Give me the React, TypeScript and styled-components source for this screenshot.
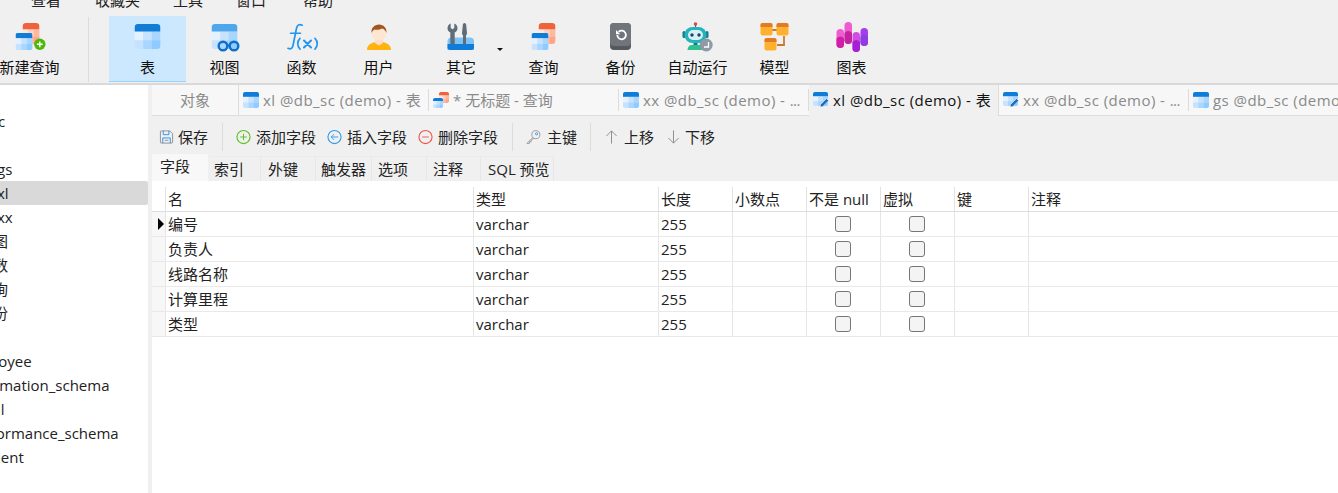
import React from "react";
import styled, { createGlobalStyle } from "styled-components";

const FONT = `"Open Sans", "Noto Sans CJK SC", sans-serif`;

const Global = createGlobalStyle`
  html, body { margin: 0; padding: 0; background: #fff; }
  body { font-family: ${FONT}; font-size: 15px; color: #111; }
`;

const Page = styled.div`
  width: 1338px; height: 493px; overflow: hidden; display: flex; flex-direction: column; background: #fff;
`;
const Top = styled.header`
  height: 83px; flex: none; background: #f0f0f0; border-bottom: 2px solid #d9d9d9; overflow: hidden;
`;
const MenuBar = styled.nav`
  height: 16px; overflow: hidden; position: relative;
`;
const MenuInner = styled.div`
  display: flex; margin-top: -10px; line-height: 20px; color: #222;
`;
const MenuItem = styled.span<{ $w: number }>`
  flex: none; width: ${(p) => p.$w}px;
`;
const Ribbon = styled.div`
  display: flex; height: 67px; margin-left: -9px;
`;
const RibbonDivider = styled.div`
  width: 1px; height: 65px; margin: 1px 20px 0 20px; background: #dcdcdc; flex: none;
`;
const RibbonBtn = styled.div<{ $active?: boolean; $w?: number }>`
  position: relative; flex: none; box-sizing: border-box; width: ${(p) => p.$w ?? 77}px; height: 66px;
  display: flex; flex-direction: column; align-items: center; padding-top: 6px;
  background: ${(p) => (p.$active ? "#cce8ff" : "transparent")};
  border-bottom: 1px solid ${(p) => (p.$active ? "#99d1ff" : "transparent")};
`;
const RibbonIcon = styled.svg`
  width: 40px; height: 32px; display: block; flex: none;
`;
const RibbonLabel = styled.span`
  line-height: 20px; margin-top: 3px; white-space: nowrap; color: #111;
`;
const Caret = styled.i`
  position: absolute; left: 80px; top: 32px; width: 0; height: 0;
  border-left: 3px solid transparent; border-right: 3px solid transparent; border-top: 3px solid #111;
`;
const Body = styled.div`
  flex: 1; display: flex; min-height: 0;
`;
const Sidebar = styled.aside`
  width: 148px; flex: none; background: #fff; overflow: hidden;
`;
const TreeRow = styled.div<{ $sel?: boolean; $x: number }>`
  height: 24px; line-height: 24px; white-space: nowrap; color: #222;
  text-indent: ${(p) => p.$x}px; border-radius: 0 2px 2px 0;
  background: ${(p) => (p.$sel ? "#d9d9d9" : "transparent")};
`;
const Gutter = styled.div`
  width: 4px; flex: none; background: #f0f0f0;
`;
const Main = styled.main`
  flex: 1; min-width: 0; display: flex; flex-direction: column; overflow: hidden;
`;
const TabBar = styled.div`
  height: 30px; flex: none; display: flex; background: #f7f7f7; border-bottom: 1px solid #dedede;
`;
const ObjTab = styled.div`
  width: 87px; flex: none; box-sizing: border-box; display: flex; align-items: center; justify-content: center;
  color: #8a8a8a; border-right: 1px solid #dcdcdc; height: 30px; padding-bottom: 1px;
`;
const Tab = styled.div<{ $active?: boolean }>`
  width: 190px; flex: none; box-sizing: border-box; height: ${(p) => (p.$active ? 31 : 30)}px; display: flex; align-items: center; gap: 4px;
  padding-left: 4px; padding-bottom: ${(p) => (p.$active ? 2 : 1)}px; white-space: nowrap; overflow: hidden; position: relative; z-index: ${(p) => (p.$active ? 1 : 0)};
  color: ${(p) => (p.$active ? "#111" : "#8a8a8a")};
  background: ${(p) => (p.$active ? "#f0f0f0" : "transparent")};
  ${(p) => (p.$active ? "border-right: 1px solid #dcdcdc;" : "")}
  &::after {
    content: ""; position: absolute; right: 0; top: 4px; bottom: 4px; width: 1px;
    background: ${(p) => (p.$active ? "transparent" : "#dcdcdc")};
  }
`;
const TabName = styled.span`
  letter-spacing: 0.45px;
`;
const TabMore = styled.span`
  letter-spacing: -0.6px;
`;
const TabIcon = styled.svg`
  width: 16px; height: 16px; flex: none; display: block;
`;
const ActionBar = styled.div`
  height: 38px; flex: none; box-sizing: border-box; background: #f0f0f0; display: flex; align-items: center; padding-left: 7px; padding-top: 3px;
`;
const ActionBtn = styled.div<{ $gap?: number; $after?: number }>`
  display: flex; align-items: center; gap: ${(p) => p.$gap ?? 5}px; margin-right: ${(p) => p.$after ?? 11}px; flex: none; white-space: nowrap; color: #222;
`;
const ActionIcon = styled.svg`
  width: 15px; height: 16px; flex: none; display: block;
`;
const ActionDivider = styled.div`
  width: 1px; height: 28px; background: #dcdcdc; flex: none; margin: 0 13px 0 3px;
`;
const SubTabs = styled.div`
  height: 27px; flex: none; display: flex; background: #f0f0f0; align-items: flex-end;
`;
const SubTab = styled.div<{ $active?: boolean; $w: number; $pad?: number }>`
  width: ${(p) => p.$w}px; flex: none; box-sizing: border-box; height: ${(p) => (p.$active ? 27 : 25)}px;
  padding-left: ${(p) => p.$pad ?? 5}px; line-height: ${(p) => (p.$active ? 25 : 24)}px; white-space: nowrap; color: #222;
  background: ${(p) => (p.$active ? "#f8f8f8" : "#f0f0f0")};
  border-right: 1px solid ${(p) => (p.$active ? "#f0f0f0" : "#e6e6e6")};
  border-top: ${(p) => (p.$active ? "none" : "1px solid #ececec")};
`;
const COLS = "13px 308px 185px 74px 74px 74px 74px 74px 1fr";
const HeadRow = styled.div`
  display: grid; grid-template-columns: ${COLS}; height: 31px; box-sizing: border-box; border-bottom: 1px solid #dedede; background: #fff;
`;
const HeadCell = styled.div<{ $blank?: boolean }>`
  margin-top: 6px; padding-left: ${(p) => (p.$blank ? 0 : 2)}px; box-sizing: border-box;
  line-height: 24px; white-space: nowrap; color: #222;
  border-left: ${(p) => (p.$blank ? "none" : "1px solid #e2e2e2")};
`;
const Row = styled.div`
  display: grid; grid-template-columns: ${COLS}; height: 25px; box-sizing: border-box; border-bottom: 1px solid #e9e9e9; background: #fff;
`;
const RowHead = styled.div<{ $current?: boolean }>`
  background: #f7f7f7; position: relative;
  ${(p) =>
    p.$current
      ? `&::after { content: ""; position: absolute; left: 6px; top: 6px; width: 0; height: 0;
         border-top: 6px solid transparent; border-bottom: 6px solid transparent; border-left: 6px solid #000; }`
      : ""}
`;
const Cell = styled.div`
  padding-left: 2px; border-left: 1px solid #e6e6e6; line-height: 24px; white-space: nowrap; color: #222; box-sizing: border-box;
`;
const CheckCell = styled(Cell)`
  display: flex; align-items: center; justify-content: center; padding-left: 0; padding-right: 1px;
`;
const Check = styled.span`
  width: 16px; height: 16px; box-sizing: border-box; border: 1px solid #767676; border-radius: 3px; background: #f4f4f4; display: block;
`;

const cells = [
  ["#e4f1ff", "#c6e2ff", "#a9d6ff"],
  ["#c6e2ff", "#a9d6ff", "#8fcbff"],
];

function TableGlyph({ x, y, w, h, band, palette = cells }: { x: number; y: number; w: number; h: number; band: string; palette?: string[][] }) {
  const bandH = h * 0.3;
  const cw = w / 3;
  const ch = (h - bandH) / 2;
  const id = `c${x}${y}${w}${band.slice(1)}`.replace(/\./g, "");
  return (
    <g>
      <clipPath id={id}>
        <rect x={x} y={y} width={w} height={h} rx={h > 20 ? 3.5 : 2} />
      </clipPath>
      <g clipPath={`url(#${id})`}>
        {palette.map((r, i) =>
          r.map((c, j) => <rect key={`${i}${j}`} x={x + j * cw} y={y + bandH + i * ch} width={cw + 0.2} height={ch + 0.2} fill={c} />)
        )}
        <rect x={x} y={y} width={w} height={bandH} fill={band} />
      </g>
    </g>
  );
}

const reds = [
  ["#ffe6dc", "#ffd0bd", "#ffb9a0"],
  ["#ffd0bd", "#ffb9a0", "#ffa588"],
];

const NewQueryIcon = () => (
  <RibbonIcon viewBox="0 0 40 32">
    <TableGlyph x={12.5} y={1} w={17} h={21} band="#f0623c" palette={reds} />
    <TableGlyph x={5.5} y={11} w={17} h={17} band="#0f7cd8" />
    <circle cx={29.8} cy={22.3} r={5.7} fill="#4cb80a" />
    <path d="M29.8 19.4v5.8M26.9 22.3h5.8" stroke="#fff" strokeWidth={1.5} />
  </RibbonIcon>
);
const TableIcon = () => (
  <RibbonIcon viewBox="0 0 40 32">
    <TableGlyph x={6.5} y={2} w={26} h={25} band="#0f7cd8" />
  </RibbonIcon>
);
const ViewIcon = () => (
  <RibbonIcon viewBox="0 0 40 32">
    <TableGlyph x={6.5} y={2} w={26} h={25} band="#4ea6ec" />
    <circle cx={18} cy={24} r={4.3} fill="none" stroke="#0f6fc8" strokeWidth={2.4} />
    <circle cx={29} cy={24} r={4.3} fill="none" stroke="#0f6fc8" strokeWidth={2.4} />
    <path d="M22 23.5h3" stroke="#0f6fc8" strokeWidth={2} />
  </RibbonIcon>
);
const FuncIcon = () => (
  <RibbonIcon viewBox="0 0 40 32" fill="none" stroke="#2196f0" strokeLinecap="round">
    <path d="M20.200 3.200c-3-1.200-5-.3-5.700 3L11 23.500c-.7 3.500-2.500 3.800-5 2.800" strokeWidth={1.700} />
    <path d="M8.500 11.200h10" strokeWidth={1.600} />
    <path d="M18 16.300c-3 3-3 8 0 10.900M33 16.300c3 3 3 8 0 10.900" strokeWidth={1.700} />
    <path d="M22 18.500l7 7M29 18.500l-7 7" strokeWidth={2.100} />
  </RibbonIcon>
);
const UserIcon = () => (
  <RibbonIcon viewBox="0 0 40 32">
    <path d="M8 28c0-5 4-7 8-8l4 2 4-2c4 1 8 3 8 8z" fill="#ffb30f" />
    <path d="M16 16h8v5l-4 2.500-4-2.500z" fill="#ffdcc2" />
    <circle cx={20} cy={11} r={7.5} fill="#ffe6d2" />
    <path d="M12.500 11c-.5-5 3-8.500 7.500-8.500s8 3.500 7.500 8.500c-1-2.500-2.500-4-4.500-4.500-2 1.500-6 1.500-7.500 1-1.500.7-2.500 2-3 3.500z" fill="#a4561f" />
  </RibbonIcon>
);
const OtherIcon = () => (
  <RibbonIcon viewBox="0 0 40 32">
    <path d="M6.500 19.500c0-2.500 1.500-4 4-4h18.500c2.500 0 4 1.500 4 4V28h-26.500z" fill="#7fc2f6" />
    <path d="M6.500 22h26.500v3.500c0 1.500-1 2.500-2.500 2.500h-21.500c-1.500 0-2.500-1-2.500-2.500z" fill="#0f7cd8" />
    <path d="M9.700 1.500v4.500l1.800 1.200 1.800-1.200v-4.500c2 .8 3.200 2.600 3.200 4.700 0 1.900-1 3.300-2.800 4.300v11.500h-4.400v-11.500c-1.800-1-2.800-2.400-2.800-4.300 0-2.100 1.200-3.900 3.200-4.700z" fill="#5f6d78" />
    <path d="M23.500 1c.9 0 1.500.8 1.700 2l.8 8c.1 1.200-.5 2-1 2.500v8.500h-3v-8.500c-.5-.5-1.100-1.300-1-2.500l.8-8c.2-1.200.8-2 1.700-2z" fill="#5f6d78" />
  </RibbonIcon>
);
const QueryIcon = () => (
  <RibbonIcon viewBox="0 0 40 32">
    <TableGlyph x={14.5} y={1} w={17} h={21} band="#f0623c" palette={reds} />
    <TableGlyph x={7.5} y={11} w={17} h={17} band="#0f7cd8" />
  </RibbonIcon>
);
const BackupIcon = () => (
  <RibbonIcon viewBox="0 0 40 32">
    <rect x={9} y={1} width={21} height={27} rx={4} fill="#55595e" />
    <rect x={9} y={1} width={21} height={23} rx={4} fill="#70757b" />
    <path d="M16.300 13a4.300 4.300 0 1 0 1.300-3.100" fill="none" stroke="#fff" strokeWidth={1.8} />
    <path d="M15 8v4.200h4.200z" fill="#fff" />
  </RibbonIcon>
);
const RobotIcon = () => (
  <RibbonIcon viewBox="0 0 40 32">
    <circle cx={17.500} cy={2} r={1.800} fill="#e8443a" />
    <path d="M17.500 3v3" stroke="#5a6a72" strokeWidth={1.200} />
    <rect x={4.500} y={9} width={3} height={7} rx={1.500} fill="#167d86" />
    <rect x={27.500} y={9} width={3} height={7} rx={1.500} fill="#167d86" />
    <rect x={6.500} y={5} width={22} height={16} rx={8} fill="#22b3bd" />
    <rect x={10} y={8} width={15} height={10} rx={5} fill="#d7f2f5" />
    <circle cx={14} cy={13} r={1.700} fill="#24406b" />
    <circle cx={21} cy={13} r={1.700} fill="#24406b" />
    <path d="M15.500 21h4v2h-4z" fill="#167d86" />
    <path d="M9.500 28c0-3 2-5 4-5h8c2 0 4 2 4 5z" fill="#2fc08e" />
    <circle cx={28.200} cy={23} r={6.500} fill="#8f9aa5" />
    <path d="M30.500 20v5h-4.500" fill="none" stroke="#fff" strokeWidth={1.300} />
  </RibbonIcon>
);
const ModelBox = ({ x, y }: { x: number; y: number }) => (
  <g>
    <rect x={x} y={y} width={12} height={12.500} rx={2} fill="#ffb02e" />
    <path d={`M${x} ${y + 4}v-2a2 2 0 0 1 2-2h8a2 2 0 0 1 2 2v2z`} fill="#e27b26" />
  </g>
);
const ModelIcon = () => (
  <RibbonIcon viewBox="0 0 40 32">
    <path d="M17 8h6M29 14v9h-7" fill="none" stroke="#c97a2e" strokeWidth={1.800} />
    <ModelBox x={5.500} y={1} />
    <ModelBox x={21.500} y={1} />
    <ModelBox x={9.500} y={16} />
  </RibbonIcon>
);
const Pill = ({ x, y, w, h, c1, c2 }: { x: number; y: number; w: number; h: number; c1: string; c2: string }) => (
  <g>
    <rect x={x} y={y} width={w} height={h} rx={w / 2} fill={c1} />
    <path d={`M${x} ${y + h * 0.5}q${w / 2} -4 ${w} 0v${h * 0.5 - w / 2}a${w / 2} ${w / 2} 0 0 1 -${w} 0z`} fill={c2} />
  </g>
);
const ChartIcon = () => (
  <RibbonIcon viewBox="0 0 40 32">
    <Pill x={4.500} y={7} w={7.500} h={19} c1="#ee5ccf" c2="#cf1fa5" />
    <Pill x={12.500} y={0} w={7.500} h={22} c1="#ee5ccf" c2="#c4249f" />
    <Pill x={20.500} y={10} w={7.500} h={20} c1="#d04fe0" c2="#a61fd6" />
    <Pill x={28.500} y={6} w={7.500} h={18} c1="#a13ff0" c2="#8f3ce0" />
  </RibbonIcon>
);

const SmallTable = () => (
  <TabIcon viewBox="0 0 16 16">
    <TableGlyph x={0} y={0} w={16} h={16} band="#0f7cd8" />
  </TabIcon>
);
const SmallQuery = () => (
  <TabIcon viewBox="0 0 16 16">
    <TableGlyph x={6} y={0} w={10} h={11} band="#f0623c" palette={reds} />
    <TableGlyph x={0} y={6} w={10} h={10} band="#0f7cd8" />
  </TabIcon>
);
const SmallEdit = () => (
  <TabIcon viewBox="0 0 16 16">
    <TableGlyph x={0} y={0} w={15} h={14} band="#0f7cd8" />
    <path d="M7 15l.5-2.500 6-6 2.200 2.200-6 6z" fill="#1f6fc0" stroke="#fff" strokeWidth={0.6} />
  </TabIcon>
);

const SaveIcon = () => (
  <ActionIcon viewBox="0 0 16 16" fill="none">
    <path d="M1.500 2.500a1 1 0 0 1 1-1h9l3 3v9a1 1 0 0 1-1 1h-11a1 1 0 0 1-1-1z" stroke="#8b8f94" />
    <path d="M4.500 1.500v4h6v-4" stroke="#2a8fe6" />
    <path d="M4 14.500v-5.500h8v5.500" stroke="#2a8fe6" />
    <path d="M6 11.500h4" stroke="#8b8f94" />
  </ActionIcon>
);
const AddIcon = () => (
  <ActionIcon viewBox="0 0 16 16" fill="none">
    <circle cx={8} cy={8} r={7} stroke="#5cc01e" strokeWidth={1.200} />
    <path d="M8 4.500v7M4.500 8h7" stroke="#5cc01e" />
  </ActionIcon>
);
const InsertIcon = () => (
  <ActionIcon viewBox="0 0 16 16" fill="none">
    <circle cx={8} cy={8} r={7} stroke="#2f9bec" strokeWidth={1.200} />
    <path d="M12 8H4.500M7.500 5L4.500 8l3 3" stroke="#2f9bec" />
  </ActionIcon>
);
const DeleteIcon = () => (
  <ActionIcon viewBox="0 0 16 16" fill="none">
    <circle cx={8} cy={8} r={7} stroke="#f0554a" strokeWidth={1.200} />
    <path d="M4.500 8h7" stroke="#f0554a" />
  </ActionIcon>
);
const KeyIcon = () => (
  <ActionIcon viewBox="0 0 16 16" fill="none">
    <circle cx={10.500} cy={5.500} r={4.300} stroke="#9a9a9a" />
    <circle cx={11.300} cy={4.600} r={1.200} stroke="#3b97e6" />
    <path d="M7.300 8.500L1 14.800h2.800v-1.800h1.700v-1.700l3-2" stroke="#9a9a9a" />
  </ActionIcon>
);
const UpIcon = () => (
  <ActionIcon viewBox="0 0 16 16" fill="none">
    <path d="M8 15V1.500M2.500 7L8 1.500 13.500 7" stroke="#8a8a8a" />
  </ActionIcon>
);
const DownIcon = () => (
  <ActionIcon viewBox="0 0 16 16" fill="none">
    <path d="M8 1v13.500M2.500 9L8 14.500 13.500 9" stroke="#8a8a8a" />
  </ActionIcon>
);

const rows = ["编号", "负责人", "线路名称", "计算里程", "类型"];
const tree: { t: string; x: number; sel?: boolean }[] = [
  { t: "", x: 0 },
  { t: "db_sc", x: -34 },
  { t: "", x: 0 },
  { t: "gs", x: -3 },
  { t: "xl", x: -3, sel: true },
  { t: "xx", x: -3 },
  { t: "视图", x: -22 },
  { t: "函数", x: -22 },
  { t: "查询", x: -22 },
  { t: "备份", x: -22 },
  { t: "", x: 0 },
  { t: "employee", x: -37 },
  { t: "information_schema", x: -34 },
  { t: "mysql", x: -37 },
  { t: "performance_schema", x: -33 },
  { t: "student", x: -30 },
];

export default function App() {
  return (
    <Page>
      <Global />
      <Top>
        <MenuBar>
          <MenuInner>
            <MenuItem $w={31} />
            <MenuItem $w={64}>查看</MenuItem>
            <MenuItem $w={78}>收藏夹</MenuItem>
            <MenuItem $w={63}>工具</MenuItem>
            <MenuItem $w={67}>窗口</MenuItem>
            <MenuItem $w={60}>帮助</MenuItem>
          </MenuInner>
        </MenuBar>
        <Ribbon>
          <RibbonBtn><NewQueryIcon /><RibbonLabel>新建查询</RibbonLabel></RibbonBtn>
          <RibbonDivider />
          <RibbonBtn $active><TableIcon /><RibbonLabel>表</RibbonLabel></RibbonBtn>
          <RibbonBtn><ViewIcon /><RibbonLabel>视图</RibbonLabel></RibbonBtn>
          <RibbonBtn><FuncIcon /><RibbonLabel>函数</RibbonLabel></RibbonBtn>
          <RibbonBtn><UserIcon /><RibbonLabel>用户</RibbonLabel></RibbonBtn>
          <RibbonBtn $w={88}><OtherIcon /><RibbonLabel>其它</RibbonLabel><Caret /></RibbonBtn>
          <RibbonBtn><QueryIcon /><RibbonLabel>查询</RibbonLabel></RibbonBtn>
          <RibbonBtn><BackupIcon /><RibbonLabel>备份</RibbonLabel></RibbonBtn>
          <RibbonBtn><RobotIcon /><RibbonLabel>自动运行</RibbonLabel></RibbonBtn>
          <RibbonBtn><ModelIcon /><RibbonLabel>模型</RibbonLabel></RibbonBtn>
          <RibbonBtn><ChartIcon /><RibbonLabel>图表</RibbonLabel></RibbonBtn>
        </Ribbon>
      </Top>
      <Body>
        <Sidebar>
          {tree.map((n, i) => (
            <TreeRow key={i} $x={n.x} $sel={n.sel}>{n.t}</TreeRow>
          ))}
        </Sidebar>
        <Gutter />
        <Main>
          <TabBar>
            <ObjTab>对象</ObjTab>
            <Tab><SmallTable /><span><TabName>xl @db_sc (demo) - </TabName>表</span></Tab>
            <Tab><SmallQuery />* 无标题 - 查询</Tab>
            <Tab><SmallTable /><span><TabName>xx @db_sc (demo) - </TabName><TabMore>...</TabMore></span></Tab>
            <Tab $active><SmallEdit /><span><TabName>xl @db_sc (demo) - </TabName>表</span></Tab>
            <Tab><SmallEdit /><span><TabName>xx @db_sc (demo) - </TabName><TabMore>...</TabMore></span></Tab>
            <Tab><SmallTable /><span><TabName>gs @db_sc (demo) - </TabName>表</span></Tab>
          </TabBar>
          <ActionBar>
            <ActionBtn $gap={4}><SaveIcon />保存</ActionBtn>
            <ActionDivider />
            <ActionBtn><AddIcon />添加字段</ActionBtn>
            <ActionBtn><InsertIcon />插入字段</ActionBtn>
            <ActionBtn><DeleteIcon />删除字段</ActionBtn>
            <ActionDivider />
            <ActionBtn $gap={6} $after={10}><KeyIcon />主键</ActionBtn>
            <ActionDivider />
            <ActionBtn $after={12}><UpIcon />上移</ActionBtn>
            <ActionBtn $gap={4}><DownIcon />下移</ActionBtn>
          </ActionBar>
          <SubTabs>
            <SubTab $active $w={57} $pad={8}>字段</SubTab>
            <SubTab $w={52}>索引</SubTab>
            <SubTab $w={55} $pad={7}>外键</SubTab>
            <SubTab $w={56}>触发器</SubTab>
            <SubTab $w={55} $pad={6}>选项</SubTab>
            <SubTab $w={54} $pad={6}>注释</SubTab>
            <SubTab $w={73} $pad={7}>SQL 预览</SubTab>
          </SubTabs>
          <HeadRow>
            <HeadCell $blank />
            <HeadCell>名</HeadCell>
            <HeadCell>类型</HeadCell>
            <HeadCell>长度</HeadCell>
            <HeadCell>小数点</HeadCell>
            <HeadCell>不是 null</HeadCell>
            <HeadCell>虚拟</HeadCell>
            <HeadCell>键</HeadCell>
            <HeadCell>注释</HeadCell>
          </HeadRow>
          {rows.map((name, i) => (
            <Row key={name}>
              <RowHead $current={i === 0} />
              <Cell>{name}</Cell>
              <Cell>varchar</Cell>
              <Cell>255</Cell>
              <Cell />
              <CheckCell><Check /></CheckCell>
              <CheckCell><Check /></CheckCell>
              <Cell />
              <Cell />
            </Row>
          ))}
        </Main>
      </Body>
    </Page>
  );
}
